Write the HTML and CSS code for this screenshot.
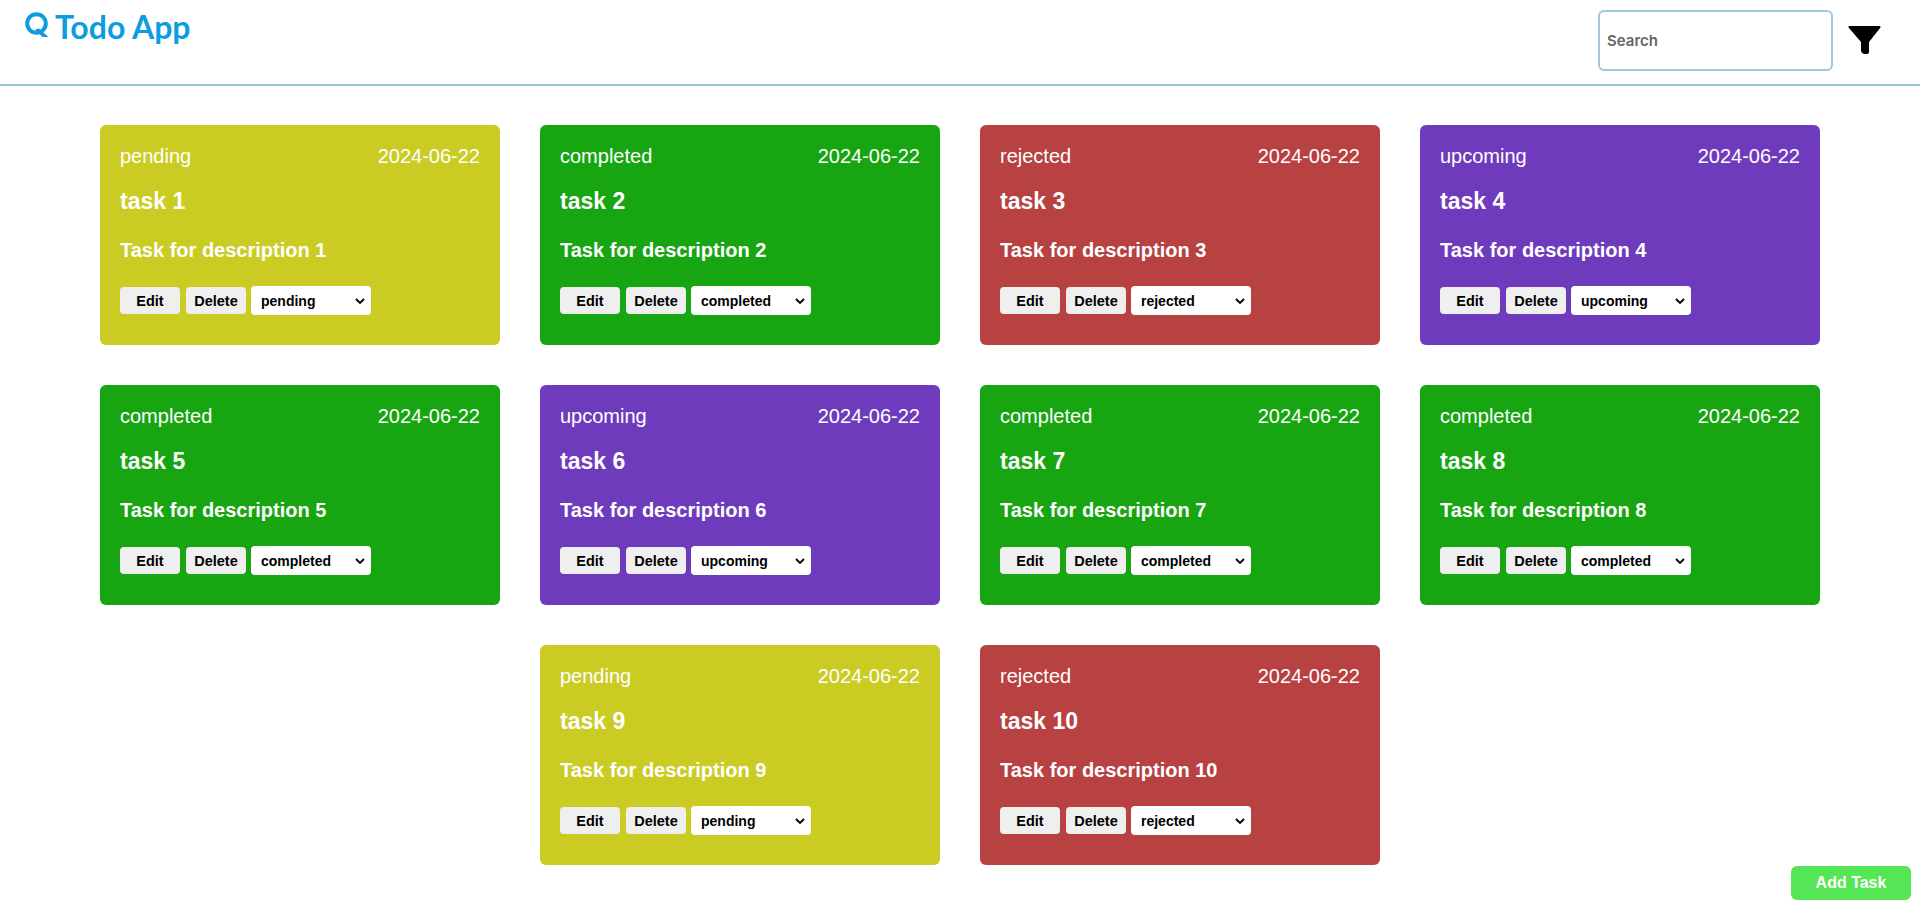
FILE: index.html
```html
<!DOCTYPE html>
<html lang="en">
<head>
    <meta charset="UTF-8">
    <meta name="viewport" content="width=device-width, initial-scale=1.0">
    <title>Todo App</title>
    <link rel="stylesheet" href="styles.css">
</head>
<body>

    <!-- Header -->
    <header class="header">
        <div class="logo">
            <svg class="logo-icon" width="24" height="25" viewBox="0 0 24 25" aria-hidden="true">
                <circle cx="11.500" cy="11.500" r="9.300" fill="none" stroke="#0d9ddf" stroke-width="4"/>
                <path d="M10 17.500l4-1 9.500 8.500h-6z" fill="#0d9ddf"/>
                <path d="M10 19.500h5v1.500h-5z" fill="#0d9ddf"/>
            </svg>
            <span>Todo App</span>
        </div>
        <div class="header-tools">
            <input class="search" type="text" placeholder="Search">
            <svg class="filter-icon" width="33" height="29" viewBox="0 0 33 29" aria-hidden="true">
                <path d="M1.500 0h30q1.500 0 1 1.500L21 16v10q0 2-2 2h-3q-2 0-3-3v-9L.5 1.500Q0 0 1.500 0z" fill="#000"/>
            </svg>
        </div>
    </header>

    <!-- Tareas -->
    <main class="task-grid">
        <div class="card pending">
            <div class="card-top"><span>pending</span><span>2024-06-22</span></div>
            <h3>task 1</h3>
            <p>Task for description 1</p>
            <div class="card-actions">
                <button>Edit</button><button>Delete</button>
                <select><option>pending</option><option>completed</option><option>rejected</option><option>upcoming</option></select>
            </div>
        </div>
        <div class="card completed">
            <div class="card-top"><span>completed</span><span>2024-06-22</span></div>
            <h3>task 2</h3>
            <p>Task for description 2</p>
            <div class="card-actions">
                <button>Edit</button><button>Delete</button>
                <select><option>completed</option><option>pending</option><option>rejected</option><option>upcoming</option></select>
            </div>
        </div>
        <div class="card rejected">
            <div class="card-top"><span>rejected</span><span>2024-06-22</span></div>
            <h3>task 3</h3>
            <p>Task for description 3</p>
            <div class="card-actions">
                <button>Edit</button><button>Delete</button>
                <select><option>rejected</option><option>pending</option><option>completed</option><option>upcoming</option></select>
            </div>
        </div>
        <div class="card upcoming">
            <div class="card-top"><span>upcoming</span><span>2024-06-22</span></div>
            <h3>task 4</h3>
            <p>Task for description 4</p>
            <div class="card-actions">
                <button>Edit</button><button>Delete</button>
                <select><option>upcoming</option><option>pending</option><option>completed</option><option>rejected</option></select>
            </div>
        </div>
        <div class="card completed">
            <div class="card-top"><span>completed</span><span>2024-06-22</span></div>
            <h3>task 5</h3>
            <p>Task for description 5</p>
            <div class="card-actions">
                <button>Edit</button><button>Delete</button>
                <select><option>completed</option><option>pending</option><option>rejected</option><option>upcoming</option></select>
            </div>
        </div>
        <div class="card upcoming">
            <div class="card-top"><span>upcoming</span><span>2024-06-22</span></div>
            <h3>task 6</h3>
            <p>Task for description 6</p>
            <div class="card-actions">
                <button>Edit</button><button>Delete</button>
                <select><option>upcoming</option><option>pending</option><option>completed</option><option>rejected</option></select>
            </div>
        </div>
        <div class="card completed">
            <div class="card-top"><span>completed</span><span>2024-06-22</span></div>
            <h3>task 7</h3>
            <p>Task for description 7</p>
            <div class="card-actions">
                <button>Edit</button><button>Delete</button>
                <select><option>completed</option><option>pending</option><option>rejected</option><option>upcoming</option></select>
            </div>
        </div>
        <div class="card completed">
            <div class="card-top"><span>completed</span><span>2024-06-22</span></div>
            <h3>task 8</h3>
            <p>Task for description 8</p>
            <div class="card-actions">
                <button>Edit</button><button>Delete</button>
                <select><option>completed</option><option>pending</option><option>rejected</option><option>upcoming</option></select>
            </div>
        </div>
        <div class="card pending">
            <div class="card-top"><span>pending</span><span>2024-06-22</span></div>
            <h3>task 9</h3>
            <p>Task for description 9</p>
            <div class="card-actions">
                <button>Edit</button><button>Delete</button>
                <select><option>pending</option><option>completed</option><option>rejected</option><option>upcoming</option></select>
            </div>
        </div>
        <div class="card rejected">
            <div class="card-top"><span>rejected</span><span>2024-06-22</span></div>
            <h3>task 10</h3>
            <p>Task for description 10</p>
            <div class="card-actions">
                <button>Edit</button><button>Delete</button>
                <select><option>rejected</option><option>pending</option><option>completed</option><option>upcoming</option></select>
            </div>
        </div>
    </main>

    <button class="add-task">Add Task</button>

</body>
</html>
```

FILE: styles.css
```css
body {
    margin: 0;
    height: 908px;
    overflow: hidden;
    background: white;
    font-family: "Liberation Sans", Arial, sans-serif;
}

/* Header */
.header {
    height: 84px;
    box-sizing: content-box;
    border-bottom: 2px solid #9cc5dc;
    display: flex;
    justify-content: space-between;
    align-items: flex-start;
    padding: 0 39px 0 25px;
}

.logo {
    display: flex;
    align-items: center;
    gap: 6px;
    height: 52px;
    color: #0d9ddf;
    font-family: Lato, sans-serif;
    font-size: 32px;
    font-weight: 700;
}

.logo-icon {
    margin-bottom: 4px;
}

.header-tools {
    display: flex;
    align-items: center;
    gap: 15px;
    padding-top: 10px;
}

.search {
    width: 235px;
    height: 61px;
    box-sizing: border-box;
    padding: 0 7px;
    border: 2px solid #a0c8dc;
    border-radius: 6px;
    outline: none;
    font-family: Inter, sans-serif;
    font-size: 15px;
    font-weight: 600;
}

.search::placeholder {
    color: #666;
    opacity: 1;
}

/* Tareas */
.task-grid {
    display: flex;
    flex-wrap: wrap;
    justify-content: center;
    gap: 40px;
    padding-top: 39px;
}

.card {
    width: 400px;
    height: 220px;
    box-sizing: border-box;
    padding: 20px;
    border-radius: 6px;
    color: white;
}

.card.pending { background-color: #cacc24; }
.card.completed { background-color: #18a512; }
.card.rejected { background-color: #b84141; }
.card.upcoming { background-color: #6f3bbd; }

.card-top {
    display: flex;
    justify-content: space-between;
    font-size: 20px;
    line-height: 22px;
}

.card h3 {
    margin: 21px 0 0;
    font-size: 23px;
    line-height: 26px;
}

.card p {
    margin: 25px 0 0;
    font-size: 20px;
    font-weight: bold;
    line-height: 22px;
}

.card-actions {
    display: flex;
    align-items: center;
    margin-top: 25px;
}

.card-actions button {
    width: 60px;
    height: 27px;
    margin-right: 6px;
    padding: 0;
    border: none;
    border-radius: 4px;
    background-color: #efefef;
    color: black;
    font-family: inherit;
    font-size: 14.500px;
    font-weight: bold;
}

.card-actions select {
    width: 120px;
    height: 29px;
    margin-left: -1px;
    padding: 0 10px;
    border: none;
    border-radius: 4px;
    appearance: none;
    background: white url("data:image/svg+xml,%3Csvg xmlns='http://www.w3.org/2000/svg' width='10' height='6'%3E%3Cpath d='M1 1l4 4 4-4' fill='none' stroke='%23000' stroke-width='1.800'/%3E%3C/svg%3E") no-repeat right 6px center;
    color: black;
    font-family: inherit;
    font-size: 14px;
    font-weight: bold;
}

.add-task {
    position: fixed;
    right: 9px;
    bottom: 8px;
    width: 120px;
    height: 34px;
    border: none;
    border-radius: 6px;
    background-color: #55e655;
    color: white;
    font-family: inherit;
    font-size: 16px;
    font-weight: bold;
}
```
